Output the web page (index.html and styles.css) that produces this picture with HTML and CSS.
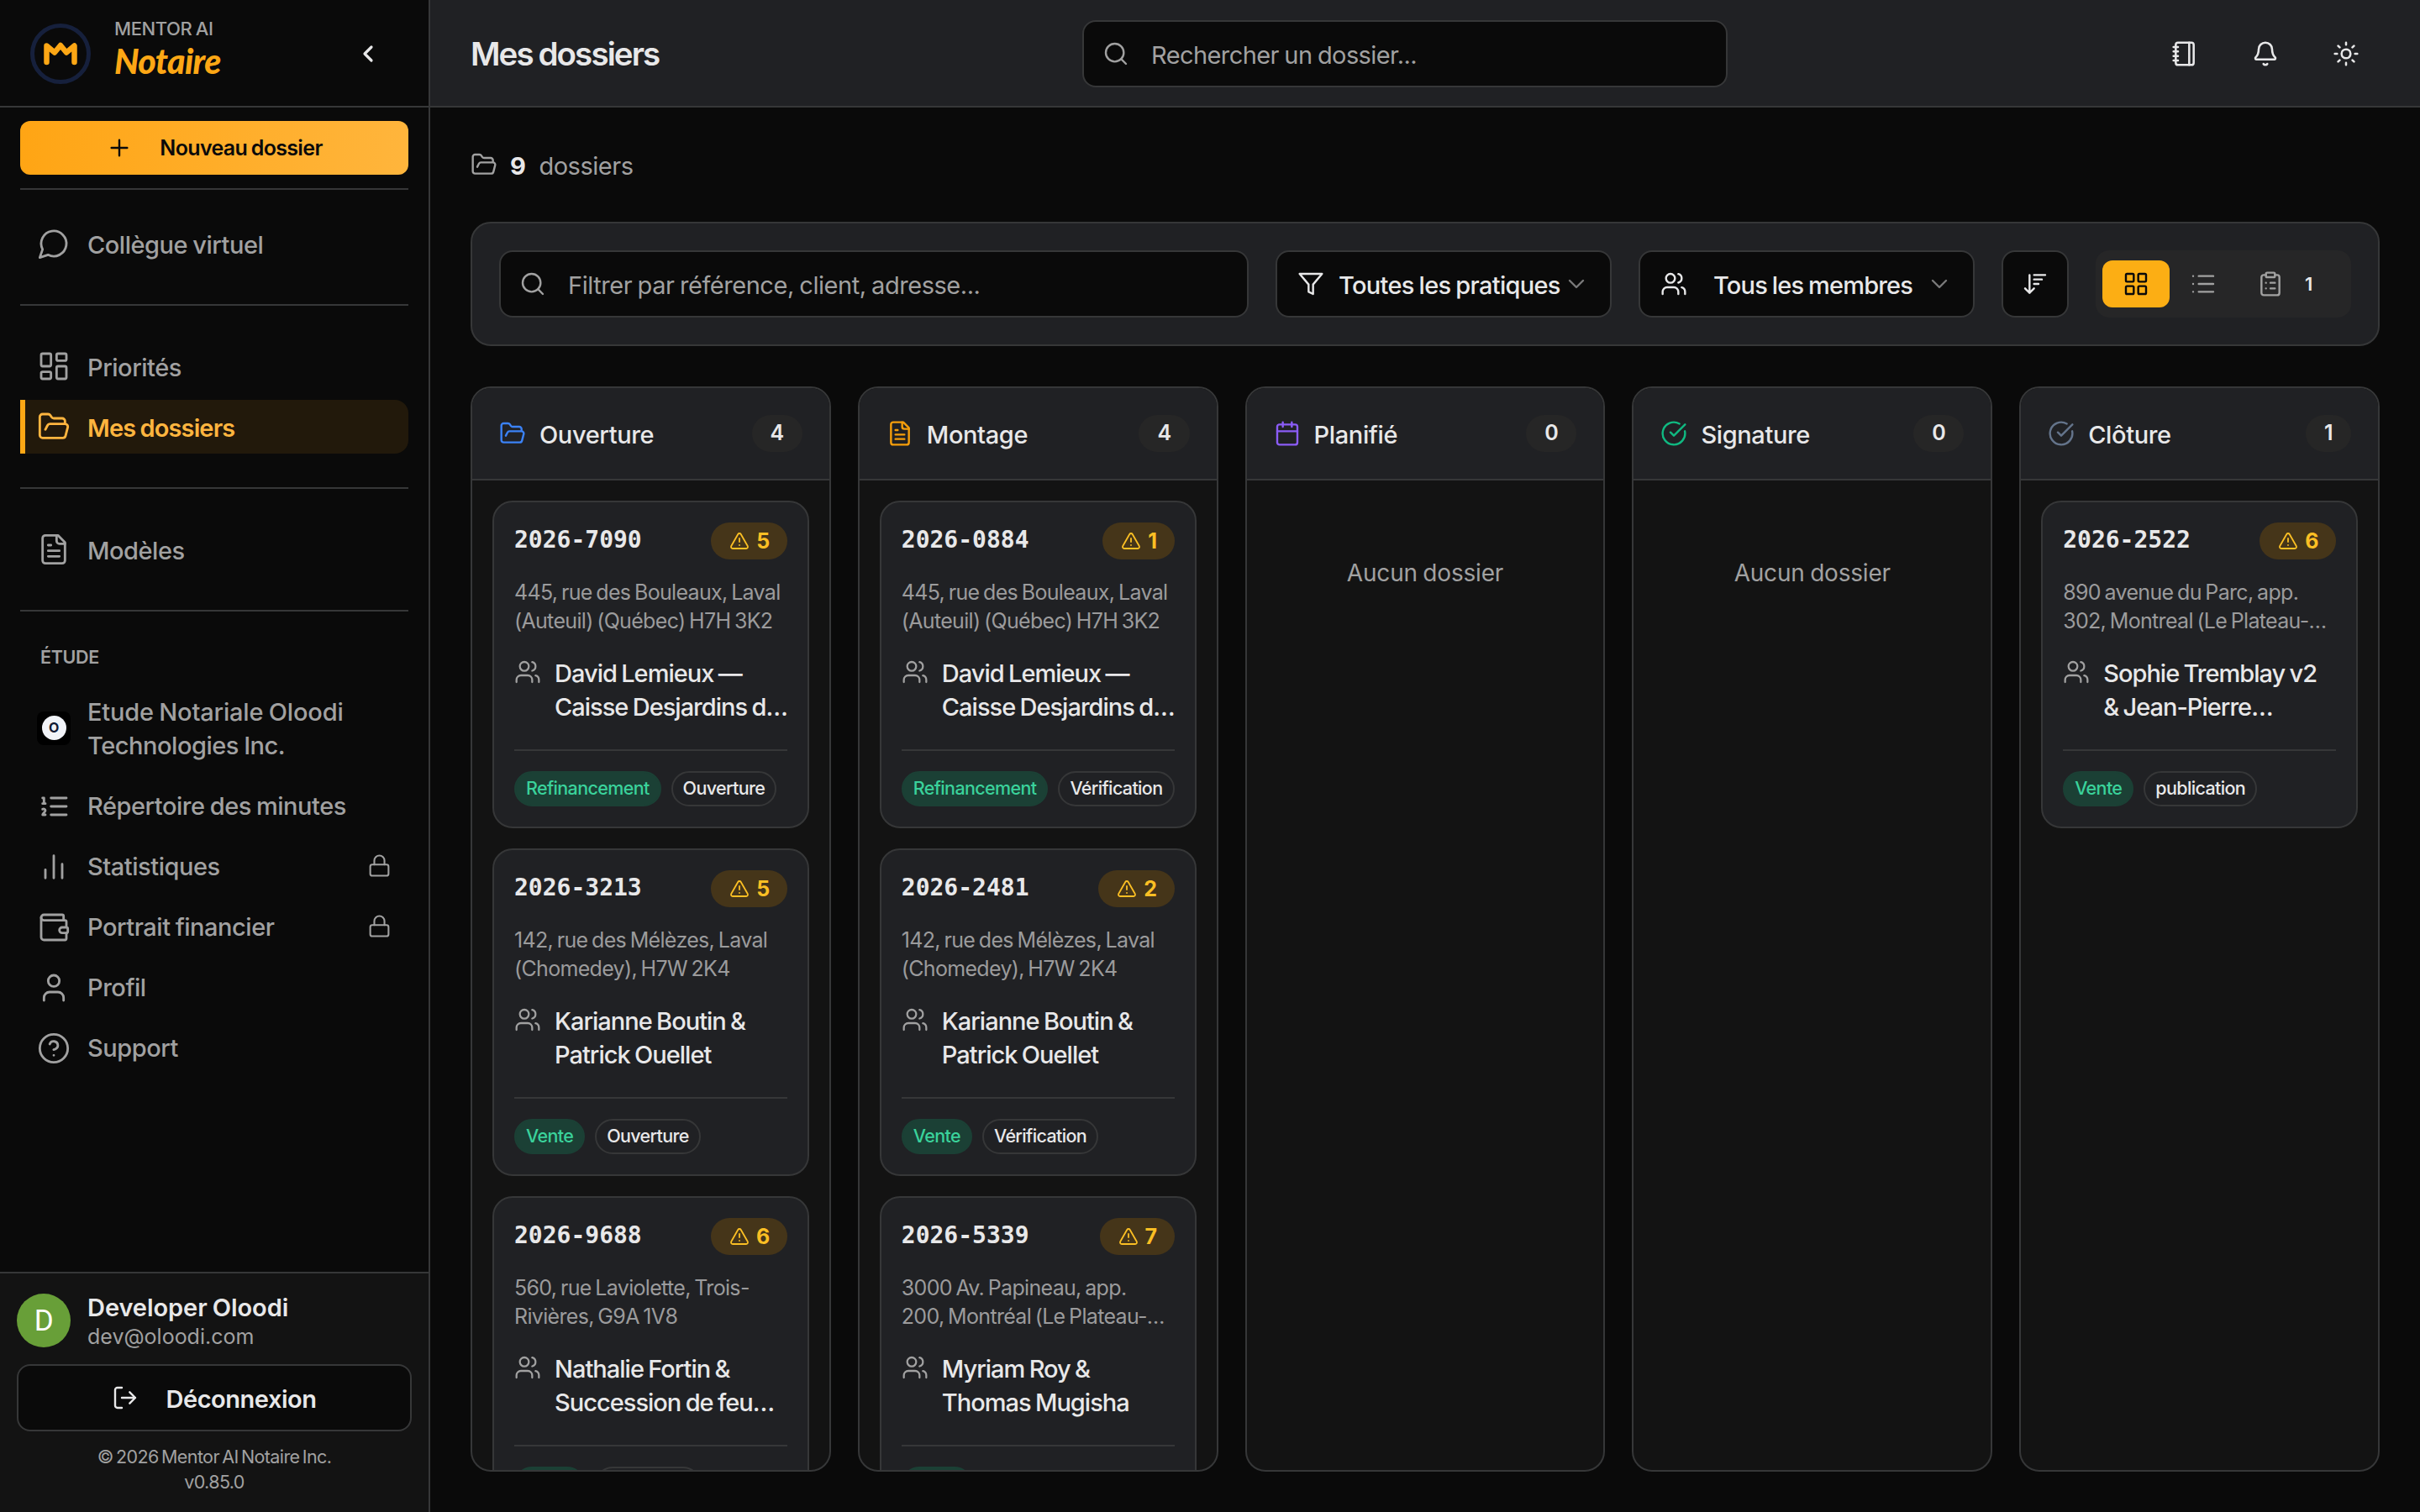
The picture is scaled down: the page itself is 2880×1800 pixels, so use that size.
FILE: index.html
```html
<!DOCTYPE html>
<html lang="fr">
<head>
<meta charset="utf-8">
<title>Mes dossiers – Mentor AI Notaire</title>
<link rel="stylesheet" href="styles.css">
</head>
<body>
<svg class="sprite" aria-hidden="true">
  <symbol id="i-chevron-left" viewBox="0 0 24 24"><path d="m15 18-6-6 6-6"/></symbol>
  <symbol id="i-chevron-down" viewBox="0 0 24 24"><path d="m6 9 6 6 6-6"/></symbol>
  <symbol id="i-plus" viewBox="0 0 24 24"><path d="M5 12h14M12 5v14"/></symbol>
  <symbol id="i-chat" viewBox="0 0 24 24"><path d="M7.9 20A9 9 0 1 0 4 16.1L2 22Z"/></symbol>
  <symbol id="i-dashboard" viewBox="0 0 24 24"><rect x="3" y="3" width="7" height="9" rx="1"/><rect x="14" y="3" width="7" height="5" rx="1"/><rect x="14" y="12" width="7" height="9" rx="1"/><rect x="3" y="16" width="7" height="5" rx="1"/></symbol>
  <symbol id="i-folder" viewBox="0 0 24 24"><path d="m6 14 1.5-2.9A2 2 0 0 1 9.24 10H20a2 2 0 0 1 1.94 2.5l-1.54 6a2 2 0 0 1-1.95 1.5H4a2 2 0 0 1-2-2V5a2 2 0 0 1 2-2h3.9a2 2 0 0 1 1.69.9l.81 1.2a2 2 0 0 0 1.67.9H18a2 2 0 0 1 2 2v2"/></symbol>
  <symbol id="i-file" viewBox="0 0 24 24"><path d="M15 2H6a2 2 0 0 0-2 2v16a2 2 0 0 0 2 2h12a2 2 0 0 0 2-2V7Z"/><path d="M14 2v4a2 2 0 0 0 2 2h4M10 9H8M16 13H8M16 17H8"/></symbol>
  <symbol id="i-ordered" viewBox="0 0 24 24"><path d="M10 12h11M10 18h11M10 6h11M4 10h2M4 6h1v4M6 18H4c0-1 2-2 2-3s-1-1.500-2-1"/></symbol>
  <symbol id="i-bars" viewBox="0 0 24 24"><path d="M18 20V10M12 20V4M6 20v-6"/></symbol>
  <symbol id="i-wallet" viewBox="0 0 24 24"><path d="M19 7V4a1 1 0 0 0-1-1H5a2 2 0 0 0 0 4h15a1 1 0 0 1 1 1v4h-3a2 2 0 0 0 0 4h3a1 1 0 0 0 1-1v-2a1 1 0 0 0-1-1"/><path d="M3 5v14a2 2 0 0 0 2 2h15a1 1 0 0 0 1-1v-4"/></symbol>
  <symbol id="i-user" viewBox="0 0 24 24"><path d="M19 21v-2a4 4 0 0 0-4-4H9a4 4 0 0 0-4 4v2"/><circle cx="12" cy="7" r="4"/></symbol>
  <symbol id="i-help" viewBox="0 0 24 24"><circle cx="12" cy="12" r="10"/><path d="M9.090 9a3 3 0 0 1 5.830 1c0 2-3 3-3 3M12 17h.01"/></symbol>
  <symbol id="i-lock" viewBox="0 0 24 24"><rect x="3" y="11" width="18" height="11" rx="2"/><path d="M7 11V7a5 5 0 0 1 10 0v4"/></symbol>
  <symbol id="i-logout" viewBox="0 0 24 24"><path d="m16 17 5-5-5-5M21 12H9M9 21H5a2 2 0 0 1-2-2V5a2 2 0 0 1 2-2h4"/></symbol>
  <symbol id="i-search" viewBox="0 0 24 24"><circle cx="11" cy="11" r="8"/><path d="m21 21-4.340-4.340"/></symbol>
  <symbol id="i-notebook" viewBox="0 0 24 24"><path d="M2 6h4M2 10h4M2 14h4M2 18h4M16 2v20"/><rect x="4" y="2" width="16" height="20" rx="2"/></symbol>
  <symbol id="i-bell" viewBox="0 0 24 24"><path d="M10.268 21a2 2 0 0 0 3.464 0M3.262 15.326A1 1 0 0 0 4 17h16a1 1 0 0 0 .74-1.673C19.410 13.956 18 12.499 18 8A6 6 0 0 0 6 8c0 4.499-1.411 5.956-2.738 7.326"/></symbol>
  <symbol id="i-sun" viewBox="0 0 24 24"><circle cx="12" cy="12" r="4"/><path d="M12 2v2M12 20v2M4.930 4.930l1.410 1.410M17.660 17.660l1.410 1.410M2 12h2M20 12h2M6.340 17.660l-1.410 1.410M19.070 4.930l-1.410 1.410"/></symbol>
  <symbol id="i-filter" viewBox="0 0 24 24"><path d="M22 3H2l8 9.460V19l4 2v-8.540z"/></symbol>
  <symbol id="i-users" viewBox="0 0 24 24"><path d="M16 21v-2a4 4 0 0 0-4-4H6a4 4 0 0 0-4 4v2M22 21v-2a4 4 0 0 0-3-3.870M16 3.130a4 4 0 0 1 0 7.750"/><circle cx="9" cy="7" r="4"/></symbol>
  <symbol id="i-sort" viewBox="0 0 24 24"><path d="m3 16 4 4 4-4M7 20V4M11 4h10M11 8h7M11 12h4"/></symbol>
  <symbol id="i-grid" viewBox="0 0 24 24"><rect x="3" y="3" width="7" height="7" rx="1"/><rect x="14" y="3" width="7" height="7" rx="1"/><rect x="14" y="14" width="7" height="7" rx="1"/><rect x="3" y="14" width="7" height="7" rx="1"/></symbol>
  <symbol id="i-list" viewBox="0 0 24 24"><path d="M3 5h.01M3 12h.01M3 19h.01M8 5h13M8 12h13M8 19h13"/></symbol>
  <symbol id="i-clipboard" viewBox="0 0 24 24"><rect x="8" y="2" width="8" height="4" rx="1"/><path d="M16 4h2a2 2 0 0 1 2 2v14a2 2 0 0 1-2 2H6a2 2 0 0 1-2-2V6a2 2 0 0 1 2-2h2M12 11h4M12 16h4M8 11h.01M8 16h.01"/></symbol>
  <symbol id="i-calendar" viewBox="0 0 24 24"><path d="M8 2v4M16 2v4M3 10h18"/><rect x="3" y="4" width="18" height="18" rx="2"/></symbol>
  <symbol id="i-check" viewBox="0 0 24 24"><path d="M21.801 10A10 10 0 1 1 17 3.335"/><path d="m9 11 3 3L22 4"/></symbol>
  <symbol id="i-alert" viewBox="0 0 24 24"><path d="m21.730 18-8-14a2 2 0 0 0-3.480 0l-8 14A2 2 0 0 0 4 21h16a2 2 0 0 0 1.730-3M12 9v4M12 17h.01"/></symbol>
</svg>

<div class="app">
  <aside class="sidebar">
    <div class="brand">
      <svg class="brand-logo" viewBox="0 0 72 72"><circle cx="36" cy="36" r="33.500" fill="none" stroke="#16203c" stroke-width="5"/><path d="M19.500 46V26.500l9.500 8L36 26l7 8.500 9.500-8V46" fill="none" stroke="#fda715" stroke-width="6.500" stroke-linecap="round" stroke-linejoin="round"/></svg>
      <div class="brand-text">
        <span class="brand-top">MENTOR AI</span>
        <span class="brand-name">Notaire</span>
      </div>
      <svg class="icon brand-toggle"><use href="#i-chevron-left"/></svg>
    </div>

    <nav class="nav">
      <button class="new-button"><svg class="icon"><use href="#i-plus"/></svg><span>Nouveau dossier</span></button>
      <hr class="rule rule-first">
      <a class="nav-item main-item"><svg class="icon"><use href="#i-chat"/></svg><span>Collègue virtuel</span></a>
      <hr class="rule">
      <a class="nav-item main-item"><svg class="icon"><use href="#i-dashboard"/></svg><span>Priorités</span></a>
      <a class="nav-item main-item active"><svg class="icon"><use href="#i-folder"/></svg><span>Mes dossiers</span></a>
      <hr class="rule">
      <a class="nav-item main-item"><svg class="icon"><use href="#i-file"/></svg><span>Modèles</span></a>
      <hr class="rule">
      <h2 class="nav-heading">ÉTUDE</h2>
      <a class="nav-item office"><span class="office-logo"><span class="office-disc">O</span></span><span><span class="line-wide">Etude Notariale Oloodi</span><br>Technologies Inc.</span></a>
      <a class="nav-item"><svg class="icon"><use href="#i-ordered"/></svg><span>Répertoire des minutes</span></a>
      <a class="nav-item"><svg class="icon"><use href="#i-bars"/></svg><span>Statistiques</span><svg class="icon lock"><use href="#i-lock"/></svg></a>
      <a class="nav-item"><svg class="icon"><use href="#i-wallet"/></svg><span>Portrait financier</span><svg class="icon lock"><use href="#i-lock"/></svg></a>
      <a class="nav-item"><svg class="icon"><use href="#i-user"/></svg><span>Profil</span></a>
      <a class="nav-item"><svg class="icon"><use href="#i-help"/></svg><span>Support</span></a>
    </nav>

    <div class="account">
      <div class="account-user">
        <span class="avatar">D</span>
        <div class="account-text"><strong>Developer Oloodi</strong><span>dev@oloodi.com</span></div>
      </div>
      <button class="logout"><svg class="icon"><use href="#i-logout"/></svg><span>Déconnexion</span></button>
      <p class="legal">© 2026 Mentor AI Notaire Inc.<br>v0.85.0</p>
    </div>
  </aside>

  <div class="page">
    <header class="topbar">
      <h1>Mes dossiers</h1>
      <div class="field top-search"><svg class="icon"><use href="#i-search"/></svg><span>Rechercher un dossier...</span></div>
      <div class="top-actions">
        <svg class="icon"><use href="#i-notebook"/></svg>
        <svg class="icon"><use href="#i-bell"/></svg>
        <svg class="icon"><use href="#i-sun"/></svg>
      </div>
    </header>

    <main class="content">
      <div class="summary"><svg class="icon"><use href="#i-folder"/></svg><strong>9</strong><span>dossiers</span></div>

      <section class="filters">
        <div class="field filter-search"><svg class="icon"><use href="#i-search"/></svg><span>Filtrer par référence, client, adresse...</span></div>
        <div class="select"><svg class="icon"><use href="#i-filter"/></svg><span>Toutes les pratiques</span><svg class="icon chevron"><use href="#i-chevron-down"/></svg></div>
        <div class="select members"><svg class="icon"><use href="#i-users"/></svg><span>Tous les membres</span><svg class="icon chevron"><use href="#i-chevron-down"/></svg></div>
        <div class="sort"><svg class="icon"><use href="#i-sort"/></svg></div>
        <div class="views">
          <div class="view selected"><svg class="icon"><use href="#i-grid"/></svg></div>
          <div class="view"><svg class="icon"><use href="#i-list"/></svg></div>
          <div class="view view-tasks"><svg class="icon"><use href="#i-clipboard"/></svg><span>1</span></div>
        </div>
      </section>

      <section class="board">
        <div class="column">
          <div class="column-head"><svg class="icon blue"><use href="#i-folder"/></svg><h3>Ouverture</h3><span class="count">4</span></div>
          <div class="column-body">
            <article class="card">
              <div class="card-top"><span class="ref">2026-7090</span><span class="alert"><svg class="icon"><use href="#i-alert"/></svg>5</span></div>
              <p class="address">445, rue des Bouleaux, Laval<br>(Auteuil) (Québec) H7H 3K2</p>
              <div class="client"><svg class="icon"><use href="#i-users"/></svg><p>David Lemieux —<br>Caisse Desjardins d…</p></div>
              <div class="tags"><span class="tag green">Refinancement</span><span class="tag">Ouverture</span></div>
            </article>
            <article class="card">
              <div class="card-top"><span class="ref">2026-3213</span><span class="alert"><svg class="icon"><use href="#i-alert"/></svg>5</span></div>
              <p class="address">142, rue des Mélèzes, Laval<br>(Chomedey), H7W 2K4</p>
              <div class="client"><svg class="icon"><use href="#i-users"/></svg><p>Karianne Boutin &amp;<br>Patrick Ouellet</p></div>
              <div class="tags"><span class="tag green">Vente</span><span class="tag">Ouverture</span></div>
            </article>
            <article class="card">
              <div class="card-top"><span class="ref">2026-9688</span><span class="alert"><svg class="icon"><use href="#i-alert"/></svg>6</span></div>
              <p class="address">560, rue Laviolette, Trois-<br>Rivières, G9A 1V8</p>
              <div class="client"><svg class="icon"><use href="#i-users"/></svg><p>Nathalie Fortin &amp;<br>Succession de feu…</p></div>
              <div class="tags"><span class="tag green">Vente</span><span class="tag">Ouverture</span></div>
            </article>
          </div>
        </div>

        <div class="column">
          <div class="column-head"><svg class="icon amber"><use href="#i-file"/></svg><h3>Montage</h3><span class="count">4</span></div>
          <div class="column-body">
            <article class="card">
              <div class="card-top"><span class="ref">2026-0884</span><span class="alert"><svg class="icon"><use href="#i-alert"/></svg>1</span></div>
              <p class="address">445, rue des Bouleaux, Laval<br>(Auteuil) (Québec) H7H 3K2</p>
              <div class="client"><svg class="icon"><use href="#i-users"/></svg><p>David Lemieux —<br>Caisse Desjardins d…</p></div>
              <div class="tags"><span class="tag green">Refinancement</span><span class="tag">Vérification</span></div>
            </article>
            <article class="card">
              <div class="card-top"><span class="ref">2026-2481</span><span class="alert"><svg class="icon"><use href="#i-alert"/></svg>2</span></div>
              <p class="address">142, rue des Mélèzes, Laval<br>(Chomedey), H7W 2K4</p>
              <div class="client"><svg class="icon"><use href="#i-users"/></svg><p>Karianne Boutin &amp;<br>Patrick Ouellet</p></div>
              <div class="tags"><span class="tag green">Vente</span><span class="tag">Vérification</span></div>
            </article>
            <article class="card">
              <div class="card-top"><span class="ref">2026-5339</span><span class="alert"><svg class="icon"><use href="#i-alert"/></svg>7</span></div>
              <p class="address">3000 Av. Papineau, app.<br>200, Montréal (Le Plateau-…</p>
              <div class="client"><svg class="icon"><use href="#i-users"/></svg><p>Myriam Roy &amp;<br>Thomas Mugisha</p></div>
              <div class="tags"><span class="tag green">Vente</span></div>
            </article>
          </div>
        </div>

        <div class="column">
          <div class="column-head"><svg class="icon violet"><use href="#i-calendar"/></svg><h3>Planifié</h3><span class="count">0</span></div>
          <div class="column-body"><p class="empty">Aucun dossier</p></div>
        </div>

        <div class="column">
          <div class="column-head"><svg class="icon emerald"><use href="#i-check"/></svg><h3>Signature</h3><span class="count">0</span></div>
          <div class="column-body"><p class="empty">Aucun dossier</p></div>
        </div>

        <div class="column">
          <div class="column-head"><svg class="icon slate"><use href="#i-check"/></svg><h3>Clôture</h3><span class="count">1</span></div>
          <div class="column-body">
            <article class="card">
              <div class="card-top"><span class="ref">2026-2522</span><span class="alert"><svg class="icon"><use href="#i-alert"/></svg>6</span></div>
              <p class="address">890 avenue du Parc, app.<br>302, Montreal (Le Plateau-…</p>
              <div class="client"><svg class="icon"><use href="#i-users"/></svg><p>Sophie Tremblay v2<br>&amp; Jean-Pierre…</p></div>
              <div class="tags"><span class="tag green">Vente</span><span class="tag">publication</span></div>
            </article>
          </div>
        </div>
      </section>
    </main>
  </div>
</div>
</body>
</html>
```
FILE: styles.css
```css
:root {
  --bg: #0a0a0a;
  --surface: #131313;
  --raised: #202124;
  --line: #363738;
  --text: #e8e8e9;
  --muted: #a1a1a1;
  --accent: #fda715;
}

* { box-sizing: border-box; }

body {
  margin: 0;
  background: var(--bg);
  color: var(--text);
  font-family: Inter, "Liberation Sans", sans-serif;
  font-size: 29px;
  letter-spacing: -0.016em;
  word-spacing: -0.04em;
}

h1, h2, h3, p { margin: 0; font-weight: inherit; font-size: inherit; }
button { font: inherit; letter-spacing: inherit; word-spacing: inherit; color: inherit; }

.sprite { display: none; }

.icon {
  width: 32px;
  height: 32px;
  flex: none;
  fill: none;
  stroke: currentColor;
  stroke-width: 1.8;
  stroke-linecap: round;
  stroke-linejoin: round;
}

.app { display: flex; width: 2880px; height: 1800px; overflow: hidden; }

/* Sidebar */
.sidebar {
  display: flex;
  flex-direction: column;
  flex: none;
  width: 512px;
  border-right: 2px solid var(--line);
}

.brand {
  display: flex;
  align-items: center;
  flex: none;
  height: 128px;
  padding: 0 56px 0 36px;
  border-bottom: 2px solid var(--line);
}
.brand-logo { width: 72px; height: 72px; margin-top: 2px; }
.brand-text { display: flex; flex-direction: column; margin: -6px 0 0 28px; }
.brand-top {
  color: var(--muted);
  font-size: 22px;
  font-weight: 500;
  line-height: 26px;
  letter-spacing: -0.018em;
}
.brand-name {
  color: var(--accent);
  font-family: Lato, sans-serif;
  font-size: 41px;
  font-style: italic;
  font-weight: 900;
  line-height: 52px;
  letter-spacing: -0.015em;
}
.brand-toggle { margin-left: auto; margin-top: 2px; stroke-width: 2.400; }

.nav { display: flex; flex-direction: column; flex: 1; padding: 16px 24px 0; color: var(--muted); }

.new-button {
  display: flex;
  align-items: center;
  justify-content: center;
  gap: 32px;
  flex: none;
  height: 64px;
  padding: 0;
  border: 0;
  border-radius: 12px;
  background: linear-gradient(90deg, #ffa514, #ffb53c);
  color: #0a0a0a;
  font-size: 25px;
  font-weight: 600;
  letter-spacing: -0.026em;
}

.rule { width: 100%; height: 2px; margin: 40px 0; border: 0; background: var(--line); flex: none; }
.rule-first { margin: 16px 0 32px; }

.nav-item {
  display: flex;
  align-items: center;
  gap: 20px;
  flex: none;
  height: 64px;
  padding: 0 20px;
  font-weight: 500;
  line-height: 40px;
  white-space: nowrap;
}
.nav-item + .nav-item { margin-top: 8px; }
.nav-item > .icon { width: 40px; height: 40px; stroke-width: 1.700; }
.nav-item > .lock { width: 29px; height: 29px; margin: -3px 0 0 auto; }
.main-item > span { padding-top: 3px; }
.nav-item.active {
  padding-left: 14px;
  border-left: 6px solid var(--accent);
  border-radius: 0 16px 16px 0;
  background: #22190b;
  color: #ffb53f;
  font-weight: 600;
  letter-spacing: -0.03em;
}
.nav-heading {
  margin: 0 0 20px 24px;
  font-size: 21.500px;
  font-weight: 600;
  line-height: 28px;
  letter-spacing: -0.015em;
}
.nav-item.office { height: 104px; }
.line-wide { letter-spacing: -0.006em; }
.office-logo {
  display: flex;
  align-items: center;
  justify-content: center;
  width: 40px;
  height: 40px;
  margin-top: -3px;
  border-radius: 8px;
  background: #000;
}
.office-disc {
  width: 29px;
  height: 29px;
  border-radius: 50%;
  background: #f1f3f8;
  color: #111a33;
  font-size: 16px;
  font-weight: 700;
  line-height: 28px;
  text-align: center;
}

.account {
  flex: none;
  height: 286px;
  padding: 24px 20px 0;
  border-top: 2px solid var(--line);
  background: var(--surface);
}
.account-user { display: flex; align-items: center; gap: 20px; height: 64px; }
.avatar {
  width: 64px;
  height: 64px;
  border-radius: 50%;
  background: #689f38;
  color: #fff;
  font-family: Roboto, sans-serif;
  font-size: 35px;
  line-height: 66px;
  text-align: center;
}
.account-text { display: flex; flex-direction: column; color: var(--muted); font-size: 25px; line-height: 30px; letter-spacing: 0; }
.account-text strong { color: var(--text); font-size: 29px; font-weight: 600; line-height: 38px; letter-spacing: -0.002em; }
.logout {
  display: flex;
  align-items: center;
  justify-content: center;
  gap: 32px;
  width: 100%;
  height: 80px;
  margin-top: 20px;
  padding: 0;
  border: 2px solid var(--line);
  border-radius: 16px;
  background: var(--bg);
  font-weight: 600;
}
.logout span { padding-top: 2px; }
.legal { margin-top: 15px; color: var(--muted); font-size: 21.500px; line-height: 30px; text-align: center; letter-spacing: -0.028em; word-spacing: -0.1em; }

/* Top bar */
.page { display: flex; flex-direction: column; flex: 1; min-width: 0; }
.topbar {
  display: grid;
  grid-template-columns: 728px 768px 1fr;
  align-items: center;
  flex: none;
  height: 128px;
  padding: 0 72px 0 48px;
  border-bottom: 2px solid var(--line);
  background: var(--raised);
}
.topbar h1 { padding-top: 2px; font-size: 38.500px; font-weight: 600; letter-spacing: -0.049em; }
.topbar .field, .top-actions { margin-top: 2px; }
.top-actions { display: flex; justify-content: flex-end; gap: 64px; }
.top-actions .icon { stroke-width: 1.900; }

.field {
  display: flex;
  align-items: center;
  gap: 26px;
  height: 80px;
  padding: 0 22px;
  border: 2px solid var(--line);
  border-radius: 16px;
  background: var(--bg);
  color: var(--muted);
}
.top-search { letter-spacing: -0.02em; }
.field span { padding-top: 2px; }

/* Content */
.content { display: flex; flex-direction: column; flex: 1; min-height: 0; padding: 48px; }
.summary { display: flex; align-items: center; height: 40px; color: var(--muted); }
.summary strong { margin-left: 15px; padding-top: 2px; color: var(--text); font-weight: 700; }
.summary span { margin-left: 16px; padding-top: 2px; }

.filters {
  display: flex;
  align-items: center;
  gap: 32px;
  flex: none;
  height: 148px;
  margin-top: 48px;
  padding: 0 32px;
  border: 2px solid var(--line);
  border-radius: 24px;
  background: var(--raised);
}
.filter-search { flex: 1; }
.select, .sort {
  display: flex;
  align-items: center;
  height: 80px;
  border: 2px solid var(--line);
  border-radius: 16px;
  background: var(--bg);
}
.select { width: 400px; padding: 0 24px; font-weight: 500; white-space: nowrap; letter-spacing: -0.024em; }
.select span { margin-left: 17px; padding-top: 2px; }
.select.members { letter-spacing: -0.028em; }
.select.members span { margin-left: 31px; }
.chevron { margin-left: auto; opacity: .5; }
.sort { width: 80px; justify-content: center; }
.views {
  display: flex;
  align-items: center;
  width: 304px;
  height: 80px;
  padding: 0 8px;
  border-radius: 16px;
  background: #262627;
}
.view { display: flex; align-items: center; justify-content: center; width: 80px; height: 56px; color: var(--muted); }
.view.selected { border-radius: 12px; background: #fcae14; color: #0a0a0a; }
.view-tasks { width: 128px; justify-content: flex-start; padding-left: 24px; gap: 25px; }
.view-tasks span { color: var(--text); font-size: 22px; font-weight: 600; }

/* Board */
.board { display: grid; grid-template-columns: repeat(5, 1fr); gap: 32px; flex: 1; min-height: 0; margin-top: 48px; }
.column {
  display: flex;
  flex-direction: column;
  min-width: 0;
  overflow: hidden;
  border: 2px solid var(--line);
  border-radius: 24px;
  background: var(--surface);
}
.column-head {
  display: flex;
  align-items: center;
  flex: none;
  height: 110px;
  padding: 0 32px;
  border-bottom: 2px solid var(--line);
  background: var(--raised);
}
.column-head h3 { margin-left: 16px; padding-top: 2px; font-weight: 500; letter-spacing: -0.013em; }
.count {
  min-width: 52px;
  height: 44px;
  margin-left: auto;
  padding: 0 22px;
  border-radius: 22px;
  background: #262626;
  font-size: 25px;
  font-weight: 600;
  line-height: 43px;
  text-align: center;
}
.column-body { display: flex; flex-direction: column; gap: 24px; flex: 1; min-height: 0; padding: 24px; overflow: hidden; }
.empty { margin-top: 66px; color: var(--muted); font-size: 28px; line-height: 40px; text-align: center; letter-spacing: -0.007em; }

.blue { color: #3b82f6; }
.amber { color: #f59e0b; }
.violet { color: #8b5cf6; }
.emerald { color: #10b981; }
.slate { color: #64748b; }

.card {
  flex: none;
  height: 390px;
  padding: 24px;
  border: 2px solid var(--line);
  border-radius: 24px;
  background: var(--raised);
  white-space: nowrap;
}
.card-top { display: flex; justify-content: space-between; height: 44px; }
.ref {
  font-family: "DejaVu Sans Mono", monospace;
  font-size: 28px;
  font-weight: 700;
  line-height: 42px;
  letter-spacing: 0;
}
.alert {
  display: flex;
  align-items: center;
  gap: 8px;
  height: 44px;
  padding: 0 21px 0 22px;
  border-radius: 22px;
  background: #453519;
  color: #fbbf24;
  font-size: 25px;
  font-weight: 700;
}
.alert .icon { width: 24px; height: 24px; }
.address { margin-top: 22px; color: #9b9b9c; font-size: 25px; line-height: 34px; letter-spacing: -0.027em; word-spacing: -0.07em; }
.client { display: flex; gap: 16px; margin-top: 26px; }
.client .icon { margin-top: 2px; color: var(--muted); stroke-width: 1.700; }
.client p { font-weight: 450; line-height: 40px; letter-spacing: -0.034em; word-spacing: -0.05em; }
.tags { display: flex; gap: 12px; margin-top: 30px; padding-top: 24px; border-top: 2px solid var(--line); }
.tag {
  height: 42px;
  padding: 0 12px;
  border: 2px solid var(--line);
  border-radius: 21px;
  font-size: 21.500px;
  font-weight: 500;
  line-height: 37px;
  letter-spacing: -0.030em;
}
.tag.green { border-color: #1b4035; background: #1b4035; color: #3ad29b; }
```
